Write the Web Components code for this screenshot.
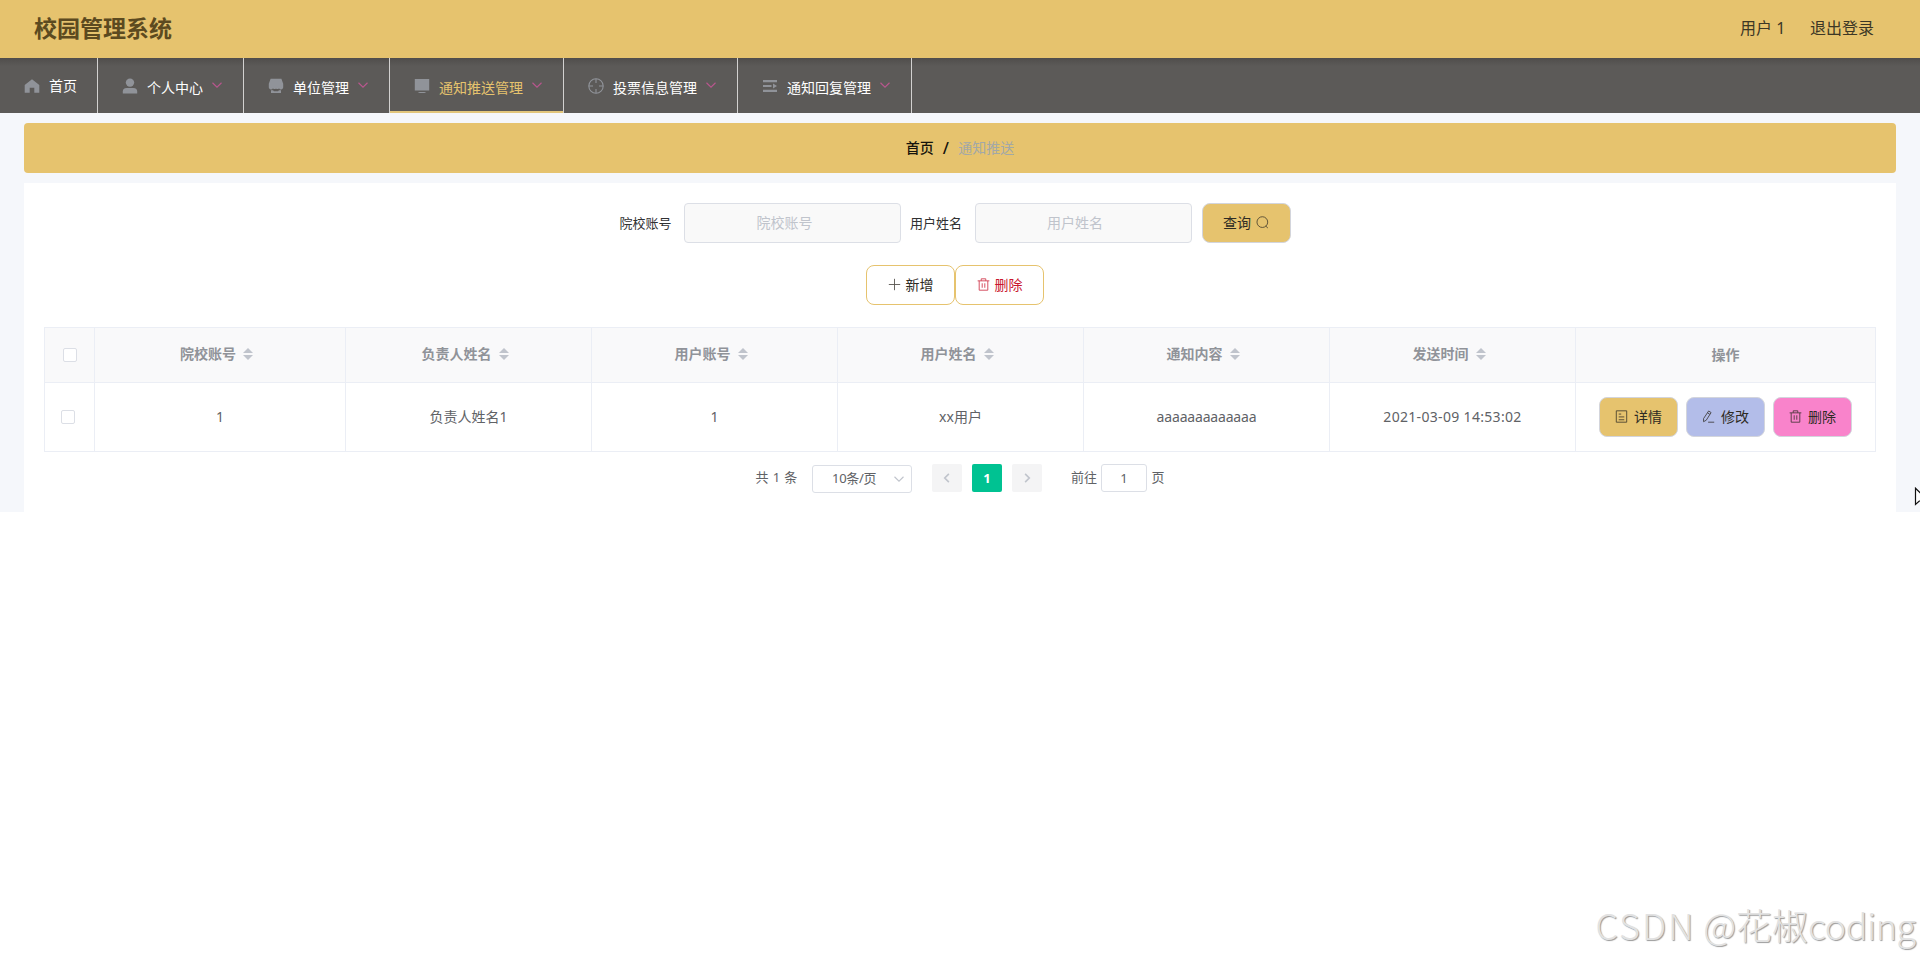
<!DOCTYPE html>
<html lang="zh-CN">
<head>
<meta charset="utf-8">
<title>校园管理系统</title>
<style>
html,body{margin:0;padding:0;background:#fff;overflow:hidden;height:960px}
body{font-family:"Noto Sans","Noto Sans CJK SC",sans-serif;font-size:14px;color:#606266}
</style>
</head>
<body>
<campus-app></campus-app>
<script>
const ICONS = {
  home: '<path fill="currentColor" d="M8 1.2 15.300 7V14.8H10.3V9.8H5.7V14.8H.7V7Z"/>',
  user: '<circle fill="currentColor" cx="8" cy="4.6" r="4.200"/><path fill="currentColor" d="M.8 15.6V13.6Q.8 10 4.6 10H11.4Q15.200 10 15.200 13.6V15.6Z"/>',
  shop: '<path fill="currentColor" d="M2.6 .8H13.4L15.200 5.8V9.6A2.2 2.2 0 0 1 11 10.200 1.800 1.800 0 0 1 8 10.400 1.800 1.800 0 0 1 5 10.200 2.2 2.2 0 0 1 .8 9.6V5.8ZM3 12.2H5L6 13.2H10L11 12.2H13V15H3Z"/>',
  screen: '<path fill="currentColor" d="M.8 1H15.200V12.6H.8ZM5.6 13.9H10.4L12.4 15H3.6Z"/>',
  aim: '<g fill="none" stroke="currentColor" stroke-width="1.1"><circle cx="8" cy="8" r="7.2"/><path d="M8 .8V5M8 11V15.200M.8 8H5M11 8H15.200"/></g>',
  list: '<path fill="currentColor" d="M1 2H15V4.200H1ZM1 6.900H9.500V9.100H1ZM1 11.800H15V14H1ZM11 5.400 15 8 11 10.600Z"/>',
  down: '<path fill="none" stroke="currentColor" stroke-width="1.5" d="M2 5 8 11 14 5"/>',
  left: '<path fill="none" stroke="currentColor" stroke-width="2.2" d="M10.500 2.500 5 8 10.500 13.500"/>',
  right: '<path fill="none" stroke="currentColor" stroke-width="2.2" d="M5.500 2.500 11 8 5.500 13.500"/>',
  search: '<g fill="none" stroke="currentColor" stroke-width="1.1"><circle cx="7.8" cy="7.500" r="6.600"/><path d="M12 12.400 14.600 14.800"/></g>',
  plus: '<path fill="none" stroke="currentColor" stroke-width="1.1" d="M8 1V15M1 8H15"/>',
  trash: '<path fill="none" stroke="currentColor" stroke-width="1.150" d="M.8 3.500H15.200M5.200 3.500V1H10.800V3.500M2.700 3.500V15H13.300V3.500M6.400 6.500V12M9.600 6.500V12"/>',
  doc: '<path fill="none" stroke="currentColor" stroke-width="1.150" d="M1.600 1H14.400V15H1.600ZM4.600 5H7.600M4.600 8.500H11.400M4.600 12H11.400"/>',
  edit: '<path fill="none" stroke="currentColor" stroke-width="1.150" d="M8.200 1.200 11.200 3.200 5.200 12.600 1.900 14.400 1.900 10.600ZM6.700 3.400 9.700 5.400M7.500 15H15"/>'
};
const define = (name, css, html) => customElements.define(name, class extends HTMLElement {
  connectedCallback() {
    if (this.shadowRoot) return;
    this.attachShadow({mode: 'open'}).innerHTML =
      `<style>*{box-sizing:border-box}${css}</style>${typeof html === 'function' ? html(this) : html}`;
  }
});

define('ui-icon', ':host{display:block;flex:none;width:14px;height:14px}svg{display:block;width:100%;height:100%}',
  e => `<svg viewBox="0 0 16 16">${ICONS[e.getAttribute('name')]}</svg>`);

define('app-header', `
  :host{display:flex;align-items:center;height:58px;padding:0 46px 0 34px;background:#e6c36e;color:#3c3726;font-size:16px;line-height:24px;box-sizing:border-box}
  h1{margin:-2px auto 0 0;font-size:23px;line-height:34px;font-weight:700;color:#5c4a20}
  .user{width:70px;margin-top:-2px}.out{margin-top:-2px}`,
  `<h1>校园管理系统</h1><span class="user">用户 1</span><span class="out">退出登录</span>`);

define('nav-item', `
  :host{display:flex;align-items:center;box-sizing:border-box;height:55px;padding:0 20px;border-right:1px solid #d2d1d0;color:#fff;line-height:20px;white-space:nowrap}
  .t{margin-top:4px}
  :host([plain]) .t{margin-top:0}
  :host([active]){color:#e6c36e;box-shadow:inset 0 -2px #e2c67c}
  .i{width:24px;margin:1px 5px 0 0;display:flex;justify-content:center;color:#909399}
  .i ui-icon{width:16px;height:16px}
  .a{width:12px;height:12px;margin:-1px 0 0 8px;color:#b9568e}`,
  e => `<span class="i"><ui-icon name="${e.getAttribute('icon')}"></ui-icon></span><span class="t"><slot></slot></span>${e.hasAttribute('plain') ? '' : '<ui-icon class="a" name="down"></ui-icon>'}`);

define('app-nav', ':host{display:flex;height:55px;background:linear-gradient(#504d4b,#5c5a58 8px)}', `
  <nav-item icon="home" plain>首页</nav-item>
  <nav-item icon="user">个人中心</nav-item>
  <nav-item icon="shop">单位管理</nav-item>
  <nav-item icon="screen" active>通知推送管理</nav-item>
  <nav-item icon="aim">投票信息管理</nav-item>
  <nav-item icon="list">通知回复管理</nav-item>`);

define('page-crumb', `
  :host{display:flex;align-items:center;justify-content:center;height:50px;border-radius:4px;background:#e6c36e;line-height:20px}
  b{font-weight:500;color:#15130c}i{font:500 16px/20px "Noto Sans";color:#15130c;margin:0 9px;width:6.500px}b,span{margin-top:-1px}span{color:#a2a8a8}`,
  `<b>首页</b><i>/</i><span>通知推送</span>`);

define('search-field', `
  :host{display:flex;align-items:center;font-size:13px;color:#303133}
  label{width:64.500px;margin-top:-2px}
  .box{width:217px;height:40px;border:1px solid #dcdfe6;border-radius:4px;background:#f9f9f9;display:flex;align-items:center;justify-content:center;padding:0 16px 2px 0;font-size:14px;color:#c0c4cc}`,
  e => `<label>${e.getAttribute('label')}</label><div class="box">${e.getAttribute('label')}</div>`);

define('ui-button', `
  :host{display:flex;align-items:center;justify-content:center;box-sizing:border-box;width:89px;height:40px;border:1px solid #d3d5dc;border-radius:8px;gap:5px;font-size:14px;line-height:20px;color:#2e2b24;background:var(--bg,#fff);padding-bottom:1px}
  :host([outline]){border-color:#e6c36e}
  :host([small]){width:78.500px;gap:6px}
  ui-icon{width:13px;height:13px;opacity:.8}`,
  e => {
    const icon = `<ui-icon name="${e.getAttribute('icon')}"></ui-icon>`;
    return e.hasAttribute('trail') ? `<slot></slot>${icon}` : `${icon}<slot></slot>`;
  });

define('check-box', ':host{display:block;width:14px;height:14px;border:1px solid #dcdfe6;border-radius:2px;background:#fff;box-sizing:border-box}', '');

define('head-cell', `
  :host{display:flex;align-items:center;justify-content:center;font-weight:700;color:#909399}
  .s{width:24px;height:14px;display:flex;flex-direction:column;align-items:center;justify-content:center;gap:2px}
  .s::before,.s::after{content:"";border:5px solid transparent;border-top:0;border-bottom-color:#c0c4cc}
  .s::after{border-top:5px solid #c0c4cc;border-bottom:0}`,
  `<slot></slot><span class="s"></span>`);

define('data-table', `
  :host{display:block;border-left:1px solid #ebeef5;border-top:1px solid #ebeef5;line-height:20px}
  .r{display:grid;grid-template-columns:50px 251px repeat(5,246px) 300px;height:69px}
  .r>div{display:flex;align-items:center;justify-content:center;border-right:1px solid #ebeef5;border-bottom:1px solid #ebeef5;min-width:0}
  .h{height:55px;background:#f9f9fa;font-weight:700;color:#909399}
  .h head-cell{margin-top:-2px}
  .r.b .ck{padding-right:3px}
  .a{letter-spacing:-.18px}.d{letter-spacing:.32px}
  .ops{gap:8.500px}`, `
  <div class="r h"><div><check-box></check-box></div>
    ${['院校账号','负责人姓名','用户账号','用户姓名','通知内容','发送时间'].map(t => `<div><head-cell>${t}</head-cell></div>`).join('')}
    <div>操作</div></div>
  <div class="r b"><div class="ck"><check-box></check-box></div>
    <div>1</div><div>负责人姓名1</div><div>1</div><div>xx用户</div><div class="a">aaaaaaaaaaaaa</div><div class="d">2021-03-09 14:53:02</div>
    <div class="ops">
      <ui-button small icon="doc" style="--bg:#e6c36e">详情</ui-button>
      <ui-button small icon="edit" style="--bg:#b3bde9">修改</ui-button>
      <ui-button small icon="trash" style="--bg:#f983cb">删除</ui-button>
    </div></div>`);

define('page-pager', `
  :host{display:flex;height:28px;padding-left:711.500px;font-size:13px;line-height:27px;color:#606266;white-space:nowrap}
  .tot{width:56.500px;word-spacing:.8px}
  .sel{width:100px;height:28px;margin:1px 20px 0 0;border:1px solid #dcdfe6;border-radius:3px;display:flex;align-items:center;justify-content:space-between;padding:0 6px 0 19px;line-height:24px;letter-spacing:-.3px;color:#606266}
  .sel b{font-weight:400;margin-top:-3px}
  .sel ui-icon{width:12px;height:12px;color:#c0c4cc}
  .n{width:30px;height:28px;border-radius:2px;background:#f4f4f5;margin-right:10px;display:flex;align-items:center;justify-content:center;color:#c0c4cc}
  .n ui-icon{width:12px;height:12px;margin-top:-1px}
  .on{background:#00c292;color:#fff;font-weight:700}
  .go{margin-left:19px;width:30px}
  .in{width:46px;height:28px;border:1px solid #dcdfe6;border-radius:3px;text-align:center;line-height:26px;margin-right:4.500px}`, `
  <span class="tot">共 1 条</span><span class="sel"><b>10条/页</b><ui-icon name="down"></ui-icon></span>
  <span class="n"><ui-icon name="left"></ui-icon></span><span class="n on">1</span><span class="n"><ui-icon name="right"></ui-icon></span>
  <span class="go">前往</span><span class="in">1</span><span>页</span>`);

define('mouse-pointer', ':host{position:absolute;left:1914px;top:487px;width:6px;height:20px;overflow:hidden}svg{display:block}',
  `<svg width="14" height="20"><path d="M1.500 1.200V17.500L5.300 14 13 12.600Z" fill="#fff" stroke="#111" stroke-width="1.200"/></svg>`);

define('water-mark', `
  :host{position:absolute;left:1595.500px;top:897px;width:324px;height:54px;overflow:hidden;display:block;white-space:nowrap;font:300 36px/54px "Noto Sans CJK SC",sans-serif;color:#e2e2e2;text-shadow:1px 1px 1px #999}
  .l{letter-spacing:1.900px}.c{letter-spacing:-.5px}`,
  `<span class="l">CSDN</span> @花椒<span class="c">coding</span>`);

define('campus-app', `
  :host{display:block;width:1920px;height:960px;position:relative}
  main{box-sizing:border-box;height:399px;padding:10px 24px 0;background:#f5f7fb}
  section{margin-top:10px;height:329px;padding:20px 20px 0;background:#fff}
  .q{display:flex;padding-left:575.500px;height:40px}
  .q search-field+search-field{margin-left:9px}.q ui-button{margin-left:10px}
  .act{display:flex;justify-content:center;margin:22px 0;padding-right:10px}
  .act .del{color:#c9182f}
  page-pager{margin-top:12px}`, `
  <app-header></app-header><app-nav></app-nav>
  <main><page-crumb></page-crumb>
    <section>
      <div class="q"><search-field label="院校账号"></search-field><search-field label="用户姓名"></search-field><ui-button icon="search" trail style="--bg:#e6c36e">查询</ui-button></div>
      <div class="act"><ui-button outline icon="plus">新增</ui-button><ui-button class="del" outline icon="trash">删除</ui-button></div>
      <data-table></data-table>
      <page-pager></page-pager>
    </section></main>
  <mouse-pointer></mouse-pointer><water-mark></water-mark>`);
</script>
</body>
</html>
